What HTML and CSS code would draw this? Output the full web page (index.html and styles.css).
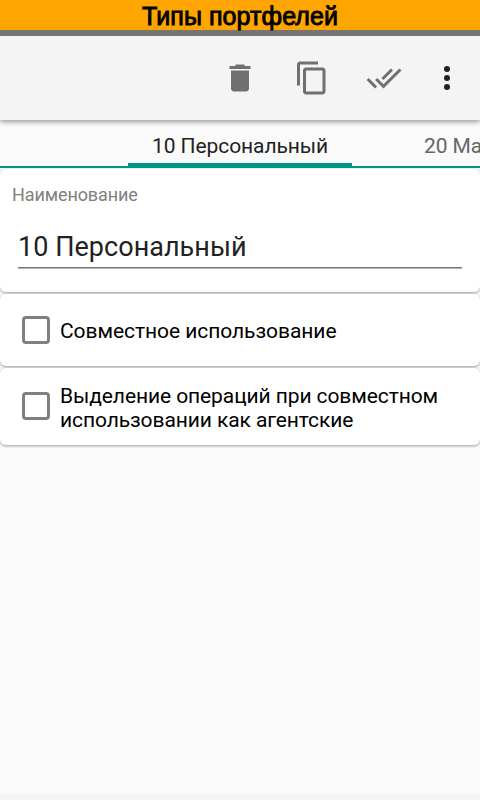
FILE: index.html
```html
<!DOCTYPE html>
<html lang="ru">
<head>
<meta charset="utf-8">
<title>Типы портфелей</title>
<link rel="stylesheet" href="styles.css">
</head>
<body>
<div class="screen">
  <header class="title">Типы портфелей</header>
  <div class="toolbar">
    <svg class="icon" viewBox="0 0 24 24"><path d="M6 19c0 1.100.9 2 2 2h8c1.100 0 2-.9 2-2V7H6v12zM19 4h-3.500l-1-1h-5l-1 1H5v2h14V4z"/></svg>
    <svg class="icon" viewBox="0 0 24 24"><path d="M16 1H4c-1.100 0-2 .9-2 2v14h2V3h12V1zm3 4H8c-1.100 0-2 .9-2 2v14c0 1.100.9 2 2 2h11c1.100 0 2-.9 2-2V7c0-1.100-.9-2-2-2zm0 16H8V7h11v14z"/></svg>
    <svg class="icon" viewBox="0 0 24 24"><path d="M18 7l-1.410-1.410-6.340 6.340 1.410 1.410L18 7zm4.240-1.410L11.660 16.170 7.480 12l-1.410 1.410L11.660 19l12-12-1.420-1.410zM.41 13.410L6 19l1.410-1.410L1.830 12 .41 13.410z"/></svg>
    <svg class="icon more" viewBox="0 0 24 24"><circle cx="12" cy="6" r="2"/><circle cx="12" cy="12" r="2"/><circle cx="12" cy="18" r="2"/></svg>
  </div>
  <nav class="tabs">
    <span class="tab active">10 Персональный</span>
    <span class="tab">20 Ма</span>
  </nav>
  <main class="cards">
    <section class="card name">
      <div class="label">Наименование</div>
      <div class="field">10 Персональный</div>
    </section>
    <section class="card option shared">
      <span class="box"></span>
      <span class="text">Совместное использование</span>
    </section>
    <section class="card option agent">
      <span class="box"></span>
      <span class="text">Выделение операций при совместном<br>использовании как агентские</span>
    </section>
  </main>
  <footer class="bottom"></footer>
</div>
</body>
</html>
```
FILE: styles.css
```css
* { box-sizing: border-box; }
body { margin: 0; font-family: Roboto, "Noto Sans", sans-serif; }
.screen {
  width: 480px;
  height: 800px;
  overflow: hidden;
  display: flex;
  flex-direction: column;
  background: #fafafa;
}
.title {
  position: relative;
  z-index: 1;
  flex: none;
  height: 36px;
  background: #ffa500;
  border-bottom: 6px solid #757575;
  font: 25px/32px "Liberation Sans", sans-serif;
  letter-spacing: .08px;
  color: #000;
  text-align: center;
  white-space: nowrap;
  -webkit-text-stroke: .9px #000;
}
.toolbar {
  flex: none;
  height: 84px;
  display: flex;
  align-items: center;
  gap: 36px;
  padding-left: 222px;
  background: #f4f4f4;
  box-shadow: 0 2px 5px rgba(0, 0, 0, .38);
}
.icon { flex: none; width: 36px; height: 36px; fill: #707070; }
.more { fill: #212121; margin-left: -9px; }
.tabs {
  flex: none;
  height: 48px;
  display: flex;
  padding-left: 128px;
  border-bottom: 2px solid #009688;
  overflow: hidden;
}
.tab {
  flex: none;
  height: 46px;
  padding: 0 24px;
  font-size: 21px;
  line-height: 52px;
  letter-spacing: -.08px;
  white-space: nowrap;
  color: #666;
}
.tabs .tab + .tab { margin-left: 48px; }
.active { width: 224px; color: #212121; border-bottom: 3px solid #009688; }
.cards {
  flex: none;
  display: flex;
  flex-direction: column;
  gap: 2px;
  padding-top: 1px;
}
.card {
  background: #fff;
  border-radius: 6px;
  box-shadow: 0 1px 3px rgba(0, 0, 0, .38);
}
.name { height: 123px; padding: 15px 18px 0; }
.label {
  margin-left: -6px;
  font-size: 18px;
  line-height: 22px;
  letter-spacing: -.1px;
  color: #808080;
}
.field {
  height: 62px;
  border-bottom: 1px solid #757575;
  box-shadow: 0 1px #b5b5b5;
  font-size: 27px;
  line-height: 83px;
  letter-spacing: .04px;
  color: #212121;
}
.option { display: flex; align-items: center; padding: 0 22px; }
.shared { height: 72px; }
.agent { height: 77px; }
.agent .box { margin-bottom: 2px; }
.box {
  flex: none;
  width: 28px;
  height: 28px;
  margin-right: 10px;
  border: 3px solid #808080;
  border-radius: 4px;
}
.text {
  padding-top: 2px;
  font-size: 21px;
  line-height: 24px;
  letter-spacing: -.06px;
  color: #000;
  white-space: nowrap;
}
.agent .text { letter-spacing: -.09px; }
.bottom { flex: none; height: 6px; margin-top: auto; background: #f4f4f4; }
```
